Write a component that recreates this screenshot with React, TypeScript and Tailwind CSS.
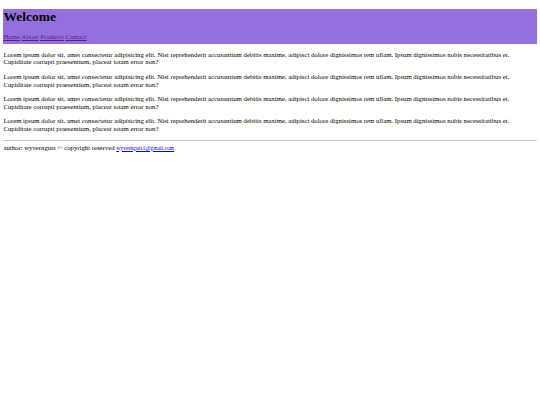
export default function App() {
  const lorem =
    "Lorem ipsum dolor sit, amet consectetur adipisicing elit. Nisi reprehenderit accusantium debitis maxime, adipisci dolore dignissimos rem ullam. Ipsum dignissimos nobis necessitatibus et. Cupiditate corrupti praesentium, placeat totam error non?";

  return (
    <div
      className="min-h-[405px] bg-white px-[3.4px] pt-[8.6px] text-[6.75px] leading-[1.15] text-black"
      style={{ fontFamily: '"Liberation Serif", "Times New Roman", serif' }}
    >
      <header className="bg-[#9370db] pb-[3px]">
        <h1 className="text-[13.5px] font-bold leading-[1.15]">Welcome</h1>
        <nav className="mt-[9px] flex gap-[1.7px]">
          <a href="#" className="text-[#551a8b] underline">Home</a>
          <a href="#" className="text-[#551a8b] underline">About</a>
          <a href="#" className="text-[#551a8b] underline">Products</a>
          <a href="#" className="text-[#551a8b] underline">Contact</a>
        </nav>
      </header>

      <main className="flex flex-col gap-[6.75px] py-[6.75px]">
        <p>{lorem}</p>
        <p>{lorem}</p>
        <p>{lorem}</p>
        <p>{lorem}</p>
      </main>

      <hr className="border-t border-[#c8c8c8]" />

      <footer className="pt-[3px]">
        author: wyvernguts © copyright reserved{" "}
        <a href="#" className="text-[5.6px] text-[#0000ee] underline">
          wyvernguts1@gmail.com
        </a>
      </footer>
    </div>
  );
}
